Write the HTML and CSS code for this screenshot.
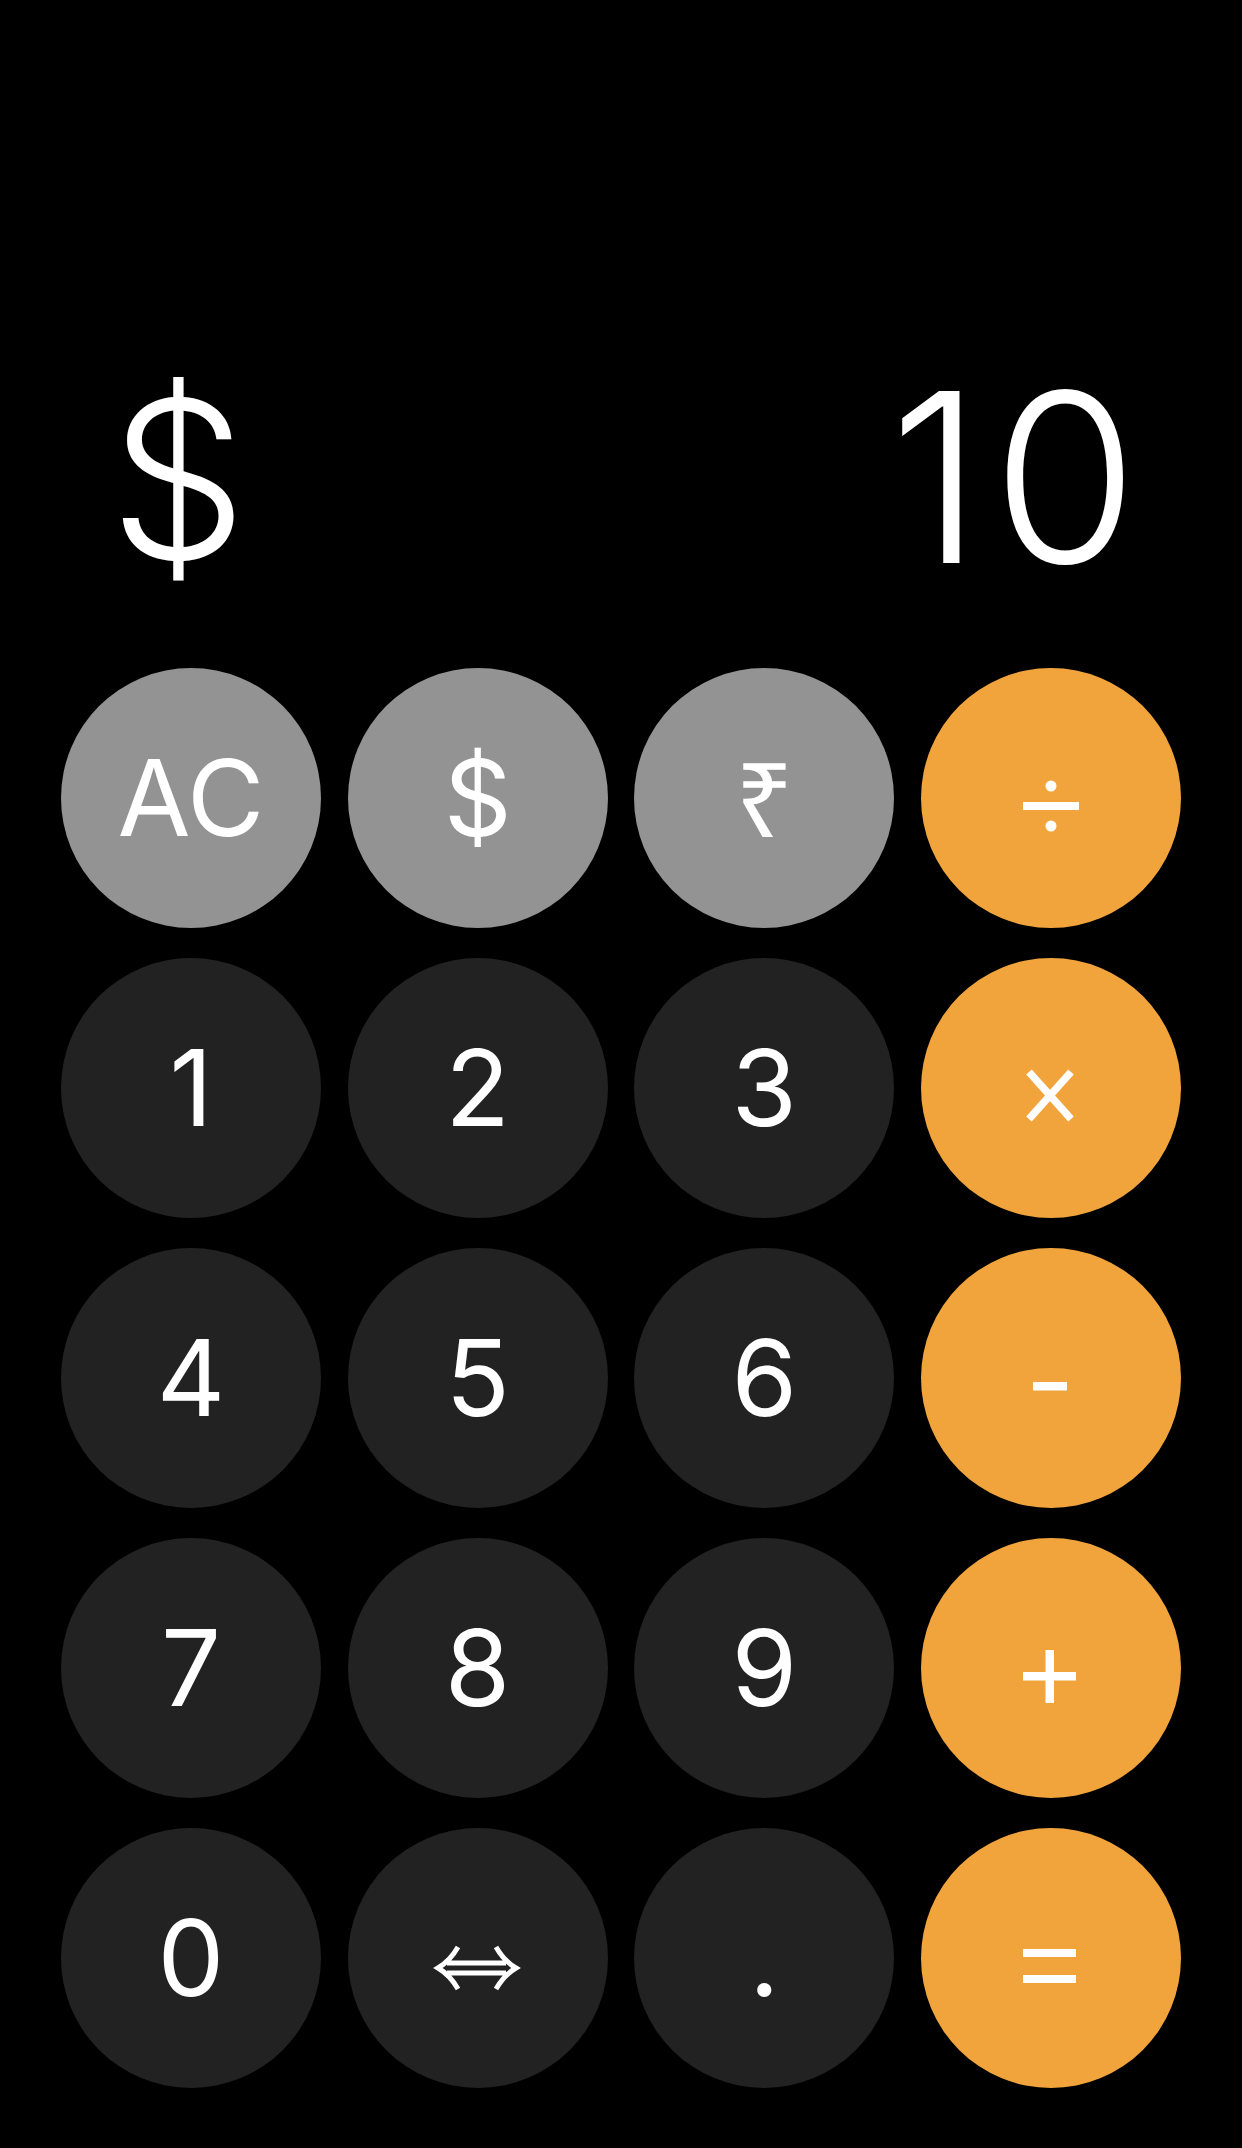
FILE: index.html
```html
<!DOCTYPE html>
<html lang="en">
<head>
<meta charset="utf-8">
<title>Currency Calculator</title>
<link rel="stylesheet" href="styles.css">
</head>
<body>
<main class="calc">
  <section class="display">
    <span class="display-currency">$</span>
    <span class="display-value">10</span>
  </section>
  <section class="keypad">
    <button class="key key-fn">AC</button>
    <button class="key key-fn">$</button>
    <button class="key key-fn key-rupee">₹</button>
    <button class="key key-op" aria-label="divide">
      <svg class="op" viewBox="0 0 260 260"><circle cx="130" cy="118" r="5.5"/><rect x="102" y="134" width="56" height="8"/><circle cx="130" cy="158" r="5.5"/></svg>
    </button>

    <button class="key">1</button>
    <button class="key">2</button>
    <button class="key">3</button>
    <button class="key key-op" aria-label="multiply">
      <svg class="op" viewBox="0 0 260 260"><path class="stroke" d="M108 114 L150 161 M150 114 L108 161"/></svg>
    </button>

    <button class="key">4</button>
    <button class="key">5</button>
    <button class="key">6</button>
    <button class="key key-op" aria-label="subtract">
      <svg class="op" viewBox="0 0 260 260"><rect x="112" y="134" width="34" height="8.5"/></svg>
    </button>

    <button class="key">7</button>
    <button class="key">8</button>
    <button class="key">9</button>
    <button class="key key-op" aria-label="add">
      <svg class="op" viewBox="0 0 260 260"><rect x="102" y="134" width="53" height="8.5"/><rect x="124.5" y="112" width="8.5" height="53"/></svg>
    </button>

    <button class="key">0</button>
    <button class="key" aria-label="swap">
      <svg class="op" viewBox="0 0 260 260"><path class="stroke thin" d="M99 135 H158 M99 145 H158 M110 119 Q102 133 90 140 Q102 147 110 161 M148 119 Q156 133 168 140 Q156 147 148 161"/></svg>
    </button>
    <button class="key key-dot">.</button>
    <button class="key key-op" aria-label="equals">
      <svg class="op" viewBox="0 0 260 260"><rect x="102" y="121" width="53" height="8"/><rect x="102" y="147" width="53" height="8"/></svg>
    </button>
  </section>
</main>
</body>
</html>
```

FILE: styles.css
```css
* {
  box-sizing: border-box;
}

html, body {
  margin: 0;
  padding: 0;
  background: #000;
}

.calc {
  width: 1242px;
  height: 2148px;
  display: flex;
  flex-direction: column;
  font-family: "Inter", "Noto Sans", "DejaVu Sans", sans-serif;
  color: #fff;
}

.display {
  flex: 1;
  display: flex;
  justify-content: space-between;
  align-items: flex-end;
  padding: 0 94px 73px 109px;
  font-size: 236px;
  font-weight: 300;
  line-height: 1;
}

.display-currency {
  font-size: 219px;
  margin-bottom: 7px;
}

.display-value {
  letter-spacing: 10px;
}

.keypad {
  display: grid;
  grid-template-columns: repeat(4, 260px);
  grid-auto-rows: 260px;
  column-gap: 26.67px;
  row-gap: 30px;
  padding: 0 61px 60px 61px;
}

.key {
  width: 260px;
  height: 260px;
  border: none;
  border-radius: 50%;
  padding: 0;
  margin: 0;
  background: #222222;
  color: #fff;
  font-family: inherit;
  font-size: 106px;
  font-weight: 400;
  line-height: 1;
  display: flex;
  align-items: center;
  justify-content: center;
}

.key-fn {
  background: #939393;
}

.key-rupee {
  font-family: "Noto Sans", "DejaVu Sans", sans-serif;
  font-size: 102px;
}

.key-op {
  background: #f1a43c;
}

.op {
  width: 260px;
  height: 260px;
  display: block;
  fill: #fff;
}

.stroke {
  fill: none;
  stroke: #fff;
  stroke-width: 7.5;
}

.stroke.thin {
  stroke-width: 5;
}
```
